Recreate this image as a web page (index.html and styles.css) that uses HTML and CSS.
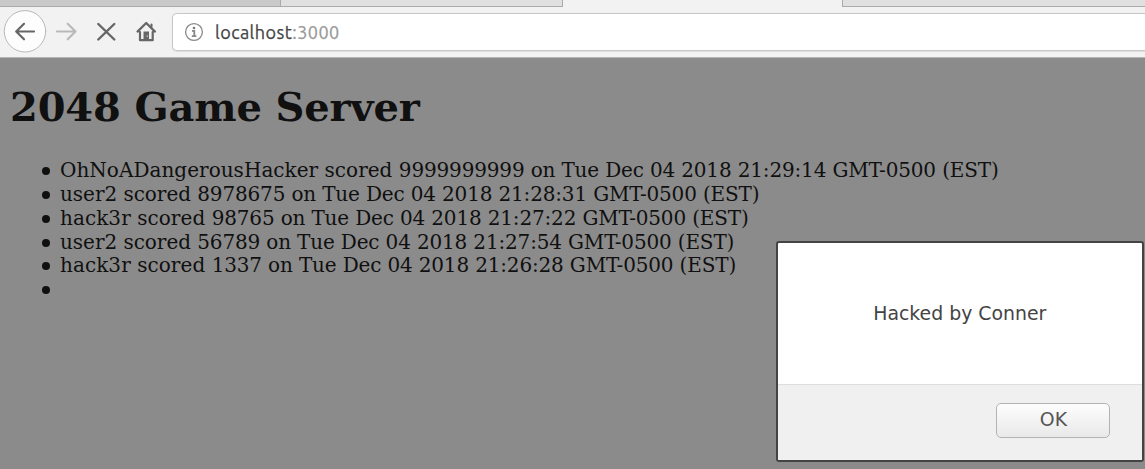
FILE: index.html
```html
<!DOCTYPE html>
<html lang="en">
<head>
<meta charset="utf-8">
<title>2048 Game Server</title>
<link rel="stylesheet" href="styles.css">
</head>
<body>
<header class="chrome">
  <div class="tabs">
    <div class="tab tab-dark"></div>
    <div class="tab tab-light"></div>
    <div class="tab tab-active"></div>
    <div class="tab tab-last"></div>
  </div>
  <div class="toolbar">
    <svg class="nav" width="172" height="50" viewBox="0 7 172 50" fill="none" stroke-linecap="round" stroke-linejoin="round">
      <circle cx="25" cy="31.3" r="20.7" fill="#fdfdfd" stroke="#b9b9b9"/>
      <path d="M34 31.5H16.5M24 23.8L16.2 31.5L24 39.3" stroke="#666" stroke-width="2.2"/>
      <path d="M57 31.5H75M67.7 23.8L75.5 31.5L67.7 39.3" stroke="#b9b9b9" stroke-width="2.2"/>
      <path d="M98.3 24L114.3 39.5M114.3 24L98.3 39.5" stroke="#666" stroke-width="2.4"/>
      <path d="M137.5 31.6L146.2 23L155 31.6M140 32V40.2H152.7V32" stroke="#666" stroke-width="2.2"/>
      <path d="M151.5 24.5V27" stroke="#666" stroke-width="2"/>
      <path d="M143.5 40V31.5H149V40Z" fill="#666"/>
      <path d="M147.2 35.5V36.7" stroke="#ccc" stroke-width="1"/>
    </svg>
    <div class="address">
      <svg class="info" width="20" height="20" viewBox="0 0 20 20" fill="none" stroke="#888">
        <circle cx="10" cy="10" r="8.4" stroke-width="1.3"/>
        <path d="M8 8.8H10.3V14M7.8 14.1H12.4" stroke-width="1.8"/>
        <circle cx="10" cy="6" r="1.3" fill="#777" stroke="none"/>
      </svg>
      <span class="host">localhost<span class="port">:3000</span></span>
    </div>
  </div>
</header>
<main class="page">
  <h1 class="title">2048 Game Server</h1>
  <ul class="scores">
    <li><span class="long">OhNoADangerousHacker scored </span>9999999999 on Tue Dec 04 2018 21:29:14 GMT-0500 (EST)</li>
    <li><span class="user">user2 scored </span>8978675 on Tue Dec 04 2018 21:28:31 GMT-0500 (EST)</li>
    <li><span class="hacker">hack3r scored </span>98765 on Tue Dec 04 2018 21:27:22 GMT-0500 (EST)</li>
    <li><span class="user">user2 scored </span>56789 on Tue Dec 04 2018 21:27:54 GMT-0500 (EST)</li>
    <li><span class="hacker">hack3r scored </span>1337 on Tue Dec 04 2018 21:26:28 GMT-0500 (EST)</li>
    <li></li>
  </ul>
</main>
<div class="dialog" role="alertdialog">
  <div class="message"><span class="label">Hacked by Conner</span></div>
  <div class="actions"><button class="ok"><span class="label">OK</span></button></div>
</div>
</body>
</html>
```
FILE: styles.css
```css
* { box-sizing: border-box; }
body {
  margin: 0;
  width: 1145px;
  height: 469px;
  overflow: hidden;
  position: relative;
  display: flex;
  flex-direction: column;
  background: #8b8b8b;
}
.chrome {
  height: 58px;
  flex: none;
  background: #f2f2f2;
  border-bottom: 1px solid #b5b5b5;
}
.tabs { display: flex; height: 7px; }
.tab {
  border-right: 1px solid #aaa;
  border-bottom: 1px solid #ababab;
}
.tab-dark { width: 281px; background: #c9c9c9; }
.tab-light { width: 282px; background: #e0e0e0; }
.tab-active { width: 280px; border-bottom: 0; }
.tab-last { flex: 1; background: #e0e0e0; border-right: 0; }
.toolbar { display: flex; height: 50px; }
.nav { flex: none; }
.address {
  flex: 1;
  height: 38px;
  margin-top: 6px;
  display: flex;
  align-items: center;
  padding-left: 11px;
  background: #fff;
  border: 1px solid #c6c6c6;
  border-right: 0;
  border-radius: 5px 0 0 5px;
  box-shadow: 0 1px 1px #ddd;
}
.host {
  margin-left: 11px;
  font: 18px/24px Ubuntu, "Noto Sans", sans-serif;
  letter-spacing: 0.45px;
  color: #444;
  -webkit-text-stroke: 0.25px currentColor;
}
.port { color: #999; }
.page {
  padding: 24px 10px 0;
  color: #101010;
  font: 20px/23.8px "DejaVu Serif", serif;
}
.title {
  margin: 0;
  font-size: 40px;
  line-height: 50px;
  letter-spacing: -0.16px;
  white-space: nowrap;
}
.scores {
  margin: 27.3px 0 0;
  padding-left: 50px;
  list-style: none;
  letter-spacing: -0.165px;
  white-space: nowrap;
}
.scores li { height: 23.8px; }
.scores li::before {
  content: "";
  display: inline-block;
  width: 8px;
  height: 8px;
  margin: 0 10px 0 -18px;
  vertical-align: 2px;
  border-radius: 50%;
  background: #101010;
}
.long { letter-spacing: 0.03px; }
.user { letter-spacing: -0.03px; }
.hacker { letter-spacing: 0.06px; }
.dialog {
  position: absolute;
  left: 776px;
  top: 241px;
  width: 368px;
  height: 221px;
  display: flex;
  flex-direction: column;
  background: #fff;
  border: 2px solid #444;
  border-radius: 3px;
  overflow: hidden;
  font: 20px/24px "DejaVu Sans", sans-serif;
  color: #444;
}
.label { display: inline-block; transform: scaleX(0.943); }
.message {
  height: 141px;
  padding-bottom: 1px;
  display: flex;
  justify-content: center;
  align-items: center;
}
.actions {
  flex: 1;
  display: flex;
  justify-content: flex-end;
  padding: 18px 32px 0 0;
  background: #f0f0f0;
  border-top: 1px solid #ddd;
}
.ok {
  width: 114px;
  height: 35px;
  padding: 0 0 3px;
  font: inherit;
  color: #555;
  border: 1px solid #b3b3b3;
  border-radius: 5px;
  background: linear-gradient(#fdfdfd, #e9e9e9);
}
```
